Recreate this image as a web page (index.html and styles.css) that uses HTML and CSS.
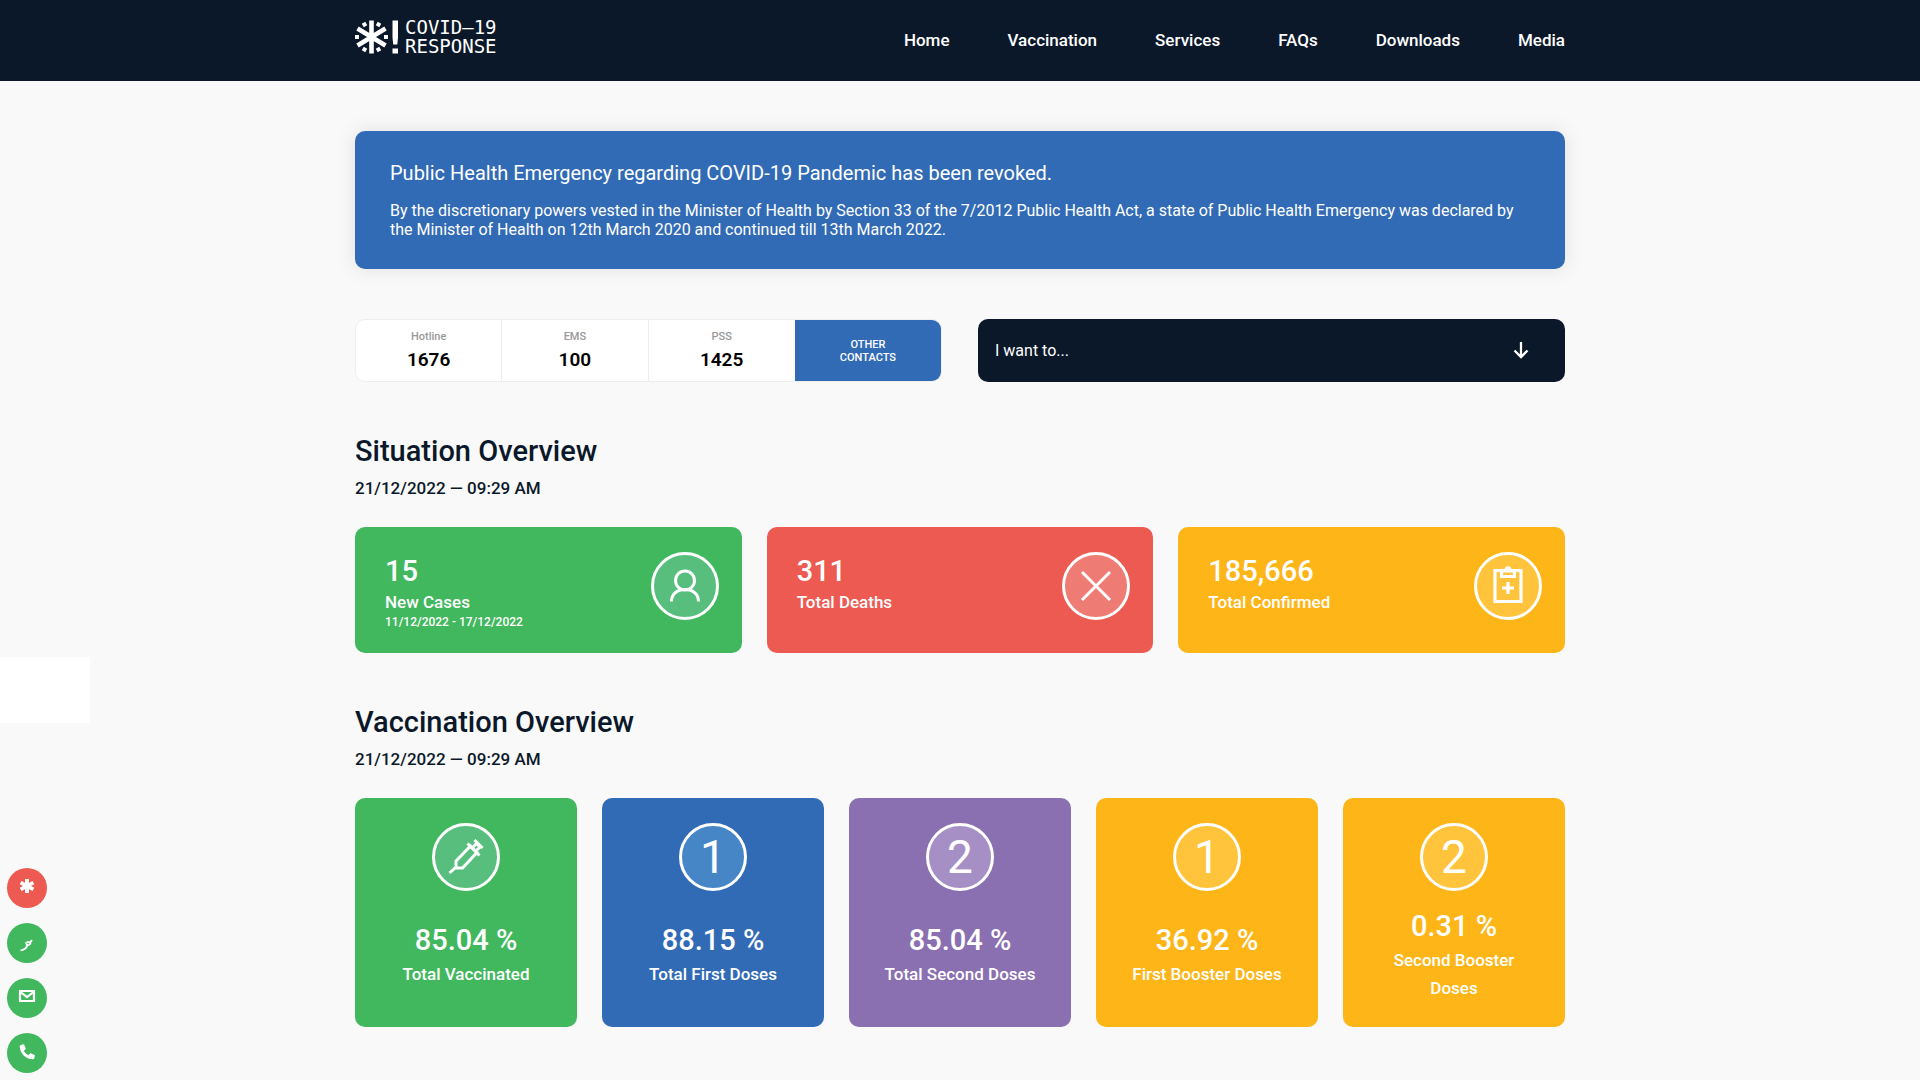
FILE: index.html
```html
<!DOCTYPE html>
<html lang="en">
<head>
<meta charset="utf-8">
<meta name="viewport" content="width=device-width, initial-scale=1">
<title>COVID-19 Response</title>
<link rel="stylesheet" href="styles.css">
</head>
<body>
<header class="site-header">
  <div class="container site-header-inner">
    <a class="logo" href="#">
      <svg class="logo-mark" viewBox="0 0 44 34" aria-hidden="true">
        <g stroke="#fff" stroke-width="4.6" fill="none">
          <path d="M16.5 0.5v33M2.5 8.5l28 17M30.5 8.5l-28 17"/>
          <path stroke-width="4" d="M0 17h4M29 17h4M8.5 2.8l2 3.5M24.5 2.8l-2 3.5M8.5 31.2l2-3.5M24.5 31.2l-2-3.5"/>
        </g>
        <path fill="#fff" d="M37.5 0.5h5.500v17l-0.700 7h-4.100l-0.700-7zM37.500 28.500h5.500v5h-5.500z"/>
      </svg>
      <span class="logo-text">COVID–19<br>RESPONSE</span>
    </a>
    <nav class="nav" aria-label="Main">
      <a href="#">Home</a>
      <a href="#">Vaccination</a>
      <a href="#">Services</a>
      <a href="#">FAQs</a>
      <a href="#">Downloads</a>
      <a href="#">Media</a>
    </nav>
  </div>
</header>

<main class="container">
  <section class="banner">
    <h1 class="banner-title">Public Health Emergency regarding COVID-19 Pandemic has been revoked.</h1>
    <p class="banner-text">By the discretionary powers vested in the Minister of Health by Section 33 of the 7/2012 Public Health Act, a state of Public Health Emergency was declared by the Minister of Health on 12th March 2020 and continued till 13th March 2022.</p>
  </section>

  <div class="tools">
    <div class="contacts">
      <a class="contact" href="#"><span class="contact-name">Hotline</span><span class="contact-number">1676</span></a>
      <a class="contact" href="#"><span class="contact-name">EMS</span><span class="contact-number">100</span></a>
      <a class="contact" href="#"><span class="contact-name">PSS</span><span class="contact-number">1425</span></a>
      <button class="contact-more" type="button">OTHER<br>CONTACTS</button>
    </div>
    <div class="wish">
      <select class="wish-select" aria-label="I want to">
        <option>I want to...</option>
      </select>
      <svg class="wish-arrow" viewBox="0 0 16 18" aria-hidden="true"><path d="M8 1v15M1.500 9.500L8 16l6.500-6.500" fill="none" stroke="#fff" stroke-width="2.300"/></svg>
    </div>
  </div>

  <section class="overview">
    <h2 class="overview-title">Situation Overview</h2>
    <p class="overview-date">21/12/2022 — 09:29 AM</p>
    <div class="cases">
      <article class="case green">
        <div>
          <p class="value">15</p>
          <p class="case-label">New Cases</p>
          <p class="case-range">11/12/2022 - 17/12/2022</p>
        </div>
        <span class="badge">
          <svg viewBox="0 0 62 62" aria-hidden="true"><g fill="none" stroke="#fff" stroke-width="3"><circle cx="31" cy="25.500" r="9.500"/><path d="M17.500 46.500c0-7 5-12 13.500-12s13.500 5 13.500 12"/></g></svg>
        </span>
      </article>
      <article class="case red">
        <div>
          <p class="value">311</p>
          <p class="case-label">Total Deaths</p>
        </div>
        <span class="badge">
          <svg viewBox="0 0 62 62" aria-hidden="true"><path d="M17 17l28 28M45 17L17 45" fill="none" stroke="#fff" stroke-width="3"/></svg>
        </span>
      </article>
      <article class="case amber">
        <div>
          <p class="value">185,666</p>
          <p class="case-label">Total Confirmed</p>
        </div>
        <span class="badge">
          <svg viewBox="0 0 62 62" aria-hidden="true"><g fill="none" stroke="#fff" stroke-width="3.200"><path d="M18 15.500h26v31h-26z"/><path d="M24.500 16.500v5h13v-5M31 27v12M25 33h12"/></g><path d="M23 14.500h4.500c0-4.500 7-4.500 7 0H39v3H23z" fill="#fff"/></svg>
        </span>
      </article>
    </div>
  </section>

  <section class="overview">
    <h2 class="overview-title">Vaccination Overview</h2>
    <p class="overview-date">21/12/2022 — 09:29 AM</p>
    <div class="doses">
      <article class="dose green">
        <span class="badge">
          <svg viewBox="0 0 62 62" aria-hidden="true"><g fill="none" stroke="#fff" stroke-width="3"><path d="M14.500 47l6-5.500M21 42v-7L35.500 20l6.500 6.500L27.500 42H20"/><path d="M32.500 17.500L44.500 29.500M38 21l3.500-3.500 3.500 3.500-3.500 3.500M39.500 14l8 8"/></g></svg>
        </span>
        <div class="dose-body"><p class="value">85.04 %</p><p class="dose-label">Total Vaccinated</p></div>
      </article>
      <article class="dose blue">
        <span class="badge">1</span>
        <div class="dose-body"><p class="value">88.15 %</p><p class="dose-label">Total First Doses</p></div>
      </article>
      <article class="dose purple">
        <span class="badge">2</span>
        <div class="dose-body"><p class="value">85.04 %</p><p class="dose-label">Total Second Doses</p></div>
      </article>
      <article class="dose amber">
        <span class="badge">1</span>
        <div class="dose-body"><p class="value">36.92 %</p><p class="dose-label">First Booster Doses</p></div>
      </article>
      <article class="dose amber">
        <span class="badge">2</span>
        <div class="dose-body"><p class="value">0.31 %</p><p class="dose-label">Second Booster Doses</p></div>
      </article>
    </div>
  </section>
</main>

<aside class="side-panel" aria-label="Notice"></aside>

<div class="quick">
  <a class="quick-link red" href="#" aria-label="Alerts"><svg viewBox="0 0 40 40" aria-hidden="true"><path d="M20 11v14M13.600 14.600l12.800 6.800M26.400 14.600l-12.800 6.800" stroke="#fff" stroke-width="3.900"/></svg></a>
  <a class="quick-link green" href="#" aria-label="Dhivehi"><svg viewBox="0 0 40 40" aria-hidden="true"><path d="M13.500 27.300c3 0 7.500-2.800 6.300-5.800 1.500 1.200 4.200.3 3.700-2.500M19.500 18.800c2 1 4.500.2 5.500-1.800" fill="none" stroke="#fff" stroke-width="1.800"/></svg></a>
  <a class="quick-link green" href="#" aria-label="Email"><svg viewBox="0 0 40 40" aria-hidden="true"><path d="M13 13h14v10H13zM13.500 14l6.500 5 6.500-5" fill="none" stroke="#fff" stroke-width="2.200"/></svg></a>
  <a class="quick-link green" href="#" aria-label="Call"><svg viewBox="0 0 40 40" aria-hidden="true"><path d="M13 12.500l2.800-1.200c.7-.2 1.200 0 1.500.6l1.300 3.100c.2.500.1 1-.3 1.400l-1.400 1.400c1 2 2.400 3.400 4.400 4.400l1.400-1.500c.4-.4.900-.5 1.400-.3l3.100 1.300c.6.300.8.800.6 1.500L27.200 25.500c-.2.500-.6.800-1.200.8C18.500 26 13 20.500 12.700 13.500c0-.4.100-.8.300-1z" fill="#fff"/></svg></a>
</div>
</body>
</html>
```
FILE: styles.css
```css
* { box-sizing: border-box; }

body {
  margin: 0;
  background: #f9f9fa;
  color: #0b1829;
  font-family: Roboto, "Liberation Sans", sans-serif;
  font-size: 16px;
}

h1, h2, p { margin: 0; }
a { color: inherit; text-decoration: none; }

.container {
  max-width: 1210px;
  margin: 0 auto;
}

.green { background: #41b75e; }
.red { background: #ec5a51; }
.amber { background: #fdb518; }
.blue { background: #326bb5; }
.purple { background: #8a6fb1; }

/* Header */
.site-header {
  background: #0b1829;
  color: #fff;
}

.site-header-inner {
  display: flex;
  align-items: center;
  justify-content: space-between;
  min-height: 81px;
}

.logo {
  display: flex;
  align-items: center;
  gap: 6px;
  padding-bottom: 7px;
}

.logo-mark { width: 44px; height: 34px; }

.logo-text {
  font-family: "DejaVu Sans Mono", monospace;
  font-size: 19px;
  line-height: 19px;
}

.nav {
  display: flex;
  gap: 58px;
  padding-bottom: 2px;
  font-size: 17px;
  font-weight: 500;
}

/* Announcement */
.banner {
  margin-top: 50px;
  padding: 30px 35px;
  border-radius: 10px;
  background: #326bb5;
  color: #fff;
  box-shadow: 0 0 20px rgba(0, 0, 0, 0.1);
}

.banner-title {
  margin-bottom: 16px;
  font-size: 20px;
  font-weight: 400;
  line-height: 24px;
}

.banner-text { line-height: 19px; }

/* Contacts and shortcuts */
.tools {
  display: grid;
  grid-template-columns: 1fr 1fr;
  gap: 36px;
  margin-top: 50px;
}

.contacts {
  display: grid;
  grid-template-columns: repeat(4, 1fr);
  min-height: 63px;
  overflow: hidden;
  border: 1px solid #eeeeef;
  border-radius: 10px;
  background: #fff;
  text-align: center;
}

.contact {
  display: flex;
  flex-direction: column;
  justify-content: center;
  padding-top: 3px;
  border-right: 1px solid #eeeeef;
}

.contact:nth-child(3) { border-right: 0; }

.contact-name {
  color: #999;
  font-size: 11px;
  font-weight: 500;
  line-height: 16px;
}

.contact-number {
  color: #000;
  font-size: 19px;
  font-weight: 600;
  line-height: 30px;
}

.contact-more {
  padding: 0;
  border: 0;
  background: #326bb5;
  color: #fff;
  font: 500 11px/13px Roboto, "Liberation Sans", sans-serif;
}

.wish {
  display: grid;
  align-items: center;
}

.wish > * { grid-area: 1 / 1; }

.wish-select {
  align-self: stretch;
  width: 100%;
  padding: 0 17px;
  border: 0;
  border-radius: 10px;
  appearance: none;
  background: #0b1829;
  color: #fff;
  font: 400 16px/20px Roboto, "Liberation Sans", sans-serif;
}

.wish-arrow {
  justify-self: end;
  width: 16px;
  height: 18px;
  margin: 0 36px 2px 0;
  pointer-events: none;
}

/* Overviews */
.overview { margin-top: 51px; }

.overview-title {
  font-size: 29px;
  font-weight: 500;
  line-height: 36px;
}

.overview-date {
  margin: 7px 0 27px;
  font-size: 17px;
  font-weight: 500;
  line-height: 24px;
}

.value {
  font-size: 29px;
  font-weight: 500;
  line-height: 39px;
}

.badge {
  display: flex;
  flex: none;
  align-items: center;
  justify-content: center;
  width: 68px;
  height: 68px;
  border: 3px solid #fff;
  border-radius: 50%;
  font-size: 46px;
  line-height: 62px;
}

.green .badge { background: #58be7d; }
.red .badge { background: #ee7b74; }
.amber .badge { background: #ffc43b; }
.blue .badge { background: #4686c7; }
.purple .badge { background: #a68fc5; }

.badge svg { width: 62px; height: 62px; }

.cases {
  display: grid;
  grid-template-columns: repeat(3, 1fr);
  gap: 25px;
}

.case {
  display: flex;
  align-items: flex-start;
  justify-content: space-between;
  min-height: 126px;
  padding: 25px 23px 22px 30px;
  border-radius: 10px;
  color: #fff;
}

.case .value { line-height: 38px; }

.case-label {
  font-size: 17px;
  font-weight: 500;
  line-height: 24px;
}

.case-range {
  font-size: 12px;
  font-weight: 500;
  line-height: 16px;
}

.doses {
  display: grid;
  grid-template-columns: repeat(5, 1fr);
  gap: 25px;
}

.dose {
  display: flex;
  flex-direction: column;
  align-items: center;
  gap: 16px;
  padding: 25px;
  border-radius: 10px;
  color: #fff;
  text-align: center;
}

.dose-body {
  display: flex;
  flex: 1;
  flex-direction: column;
  justify-content: center;
}

.dose-label {
  font-size: 17px;
  font-weight: 500;
  line-height: 28px;
}

/* Items floating over the left edge of the window */
.side-panel {
  position: fixed;
  bottom: 357px;
  left: 0;
  width: 90px;
  height: 66px;
  background: #fff;
}

.quick {
  position: fixed;
  bottom: 7px;
  left: 7px;
  display: grid;
  gap: 15px;
}

.quick-link {
  width: 40px;
  height: 40px;
  border-radius: 50%;
}

.quick-link svg { display: block; }
```
